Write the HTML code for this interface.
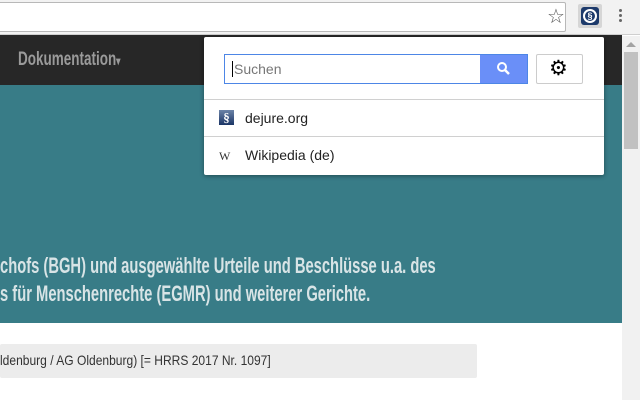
<!DOCTYPE html><html><head><style>
body{margin:0;width:640px;height:400px;overflow:hidden;position:relative;background:#fff;font-family:"Liberation Sans",sans-serif}
div{position:absolute;box-sizing:border-box}
.cond{font-family:"Liberation Sans Narrow","Liberation Sans",sans-serif;transform-origin:0 0;white-space:nowrap;color:#d8e4e6}
</style></head><body>
<div style="left:0;top:0;width:640px;height:35px;background:#f2f2f2;border-bottom:1px solid #cfcfcf"></div>
<div style="left:-5px;top:2px;width:571px;height:30px;background:#fff;border:1px solid #b8b8b8;border-radius:2px"></div>
<div style="left:547px;top:4px;font-size:20px;color:#555">☆</div>
<div style="left:578px;top:4px;width:24px;height:24px;background:#d6d6d6;border-radius:2px"></div>
<div style="left:581px;top:7px;width:18px;height:18px;background:#1d3a6b;border-radius:3px"></div>
<div style="left:583px;top:9px;width:14px;height:14px;border:2px solid #fff;border-radius:50%;color:#fff;font-size:9px;font-weight:bold;text-align:center;line-height:10px">§</div>
<div style="left:619px;top:9px;width:3px;height:3px;background:#666;border-radius:50%;box-shadow:0 5px #666,0 10px #666"></div>
<div style="left:0;top:35px;width:622px;height:50px;background:#272727"></div>
<div class="cond" style="left:18px;top:49px;font-size:19px;font-weight:bold;color:#9a9a9a;transform:scaleX(.71)">Dokumentation<span style="font-size:12px">▾</span></div>
<div style="left:0;top:85px;width:622px;height:238px;background:#387c87"></div>
<div class="cond" style="left:0;top:253px;font-size:22px;font-weight:bold;transform:scaleX(.67)">chofs (BGH) und ausgewählte Urteile und Beschlüsse u.a. des</div>
<div class="cond" style="left:0;top:281px;font-size:22px;font-weight:bold;transform:scaleX(.67)">s für Menschenrechte (EGMR) und weiterer Gerichte.</div>
<div style="left:0;top:344px;width:477px;height:34px;background:#ececec;border-radius:2px"></div>
<div class="cond" style="left:0;top:352px;font-size:14px;color:#333;transform:scaleX(.86)">ldenburg / AG Oldenburg) [= HRRS 2017 Nr. 1097]</div>
<div style="left:622px;top:36px;width:18px;height:364px;background:#f1f1f1"></div>
<div style="left:626px;top:42px;width:0;height:0;border-left:5px solid transparent;border-right:5px solid transparent;border-bottom:5px solid #a3a3a3"></div>
<div style="left:624px;top:52px;width:14px;height:97px;background:#c1c1c1"></div>
<div style="left:204px;top:37px;width:400px;height:138px;background:#fff;box-shadow:0 1px 5px rgba(0,0,0,.4);border-radius:2px"></div>
<div style="left:224px;top:54px;width:304px;height:30px;border:1px solid #4d86e6;background:#fff"></div>
<div style="left:232px;top:61px;font-size:14px;color:#777;border-left:1px solid #000;padding-left:1px">Suchen</div>
<div style="left:480px;top:55px;width:47px;height:28px;background:#6a8ff8"></div>
<svg style="position:absolute;left:496px;top:61px" width="16" height="16"><circle cx="6" cy="6" r="4" stroke="#fff" stroke-width="2" fill="none"/><path d="M9 9l4 4" stroke="#fff" stroke-width="2.5"/></svg>
<div style="left:536px;top:54px;width:47px;height:30px;border:1px solid #ccc;border-radius:2px;background:#fff"></div>
<div style="left:549px;top:56px;font-size:21px;color:#000">⚙</div>
<div style="left:204px;top:99px;width:400px;height:1px;background:#d0d0d0"></div>
<div style="left:204px;top:136px;width:400px;height:1px;background:#d0d0d0"></div>
<div style="left:219px;top:110px;width:15px;height:15px;background:linear-gradient(#6c84a8,#1b3566);color:#fff;font-size:13px;font-weight:bold;text-align:center;line-height:15px;font-family:'Liberation Serif',serif">§</div>
<div style="left:245px;top:110px;font-size:14px;color:#222">dejure.org</div>
<div style="left:219px;top:149px;font-size:12px;color:#333;font-family:'Liberation Serif',serif">W</div>
<div style="left:245px;top:147px;font-size:14px;color:#222">Wikipedia (de)</div>
</body></html>
